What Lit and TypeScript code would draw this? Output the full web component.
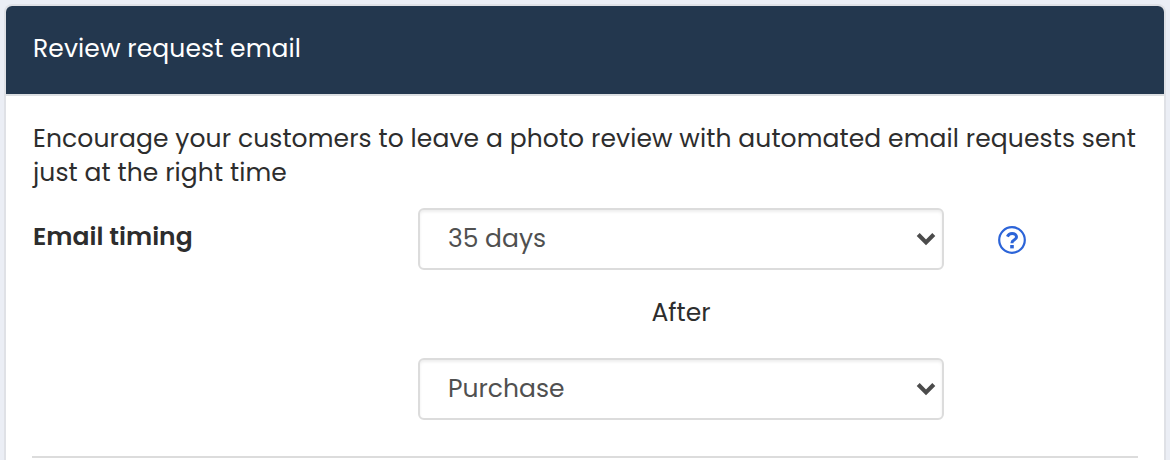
import { LitElement, html, css } from "lit";
import { customElement, property } from "lit/decorators.js";

@customElement("select-field")
class SelectField extends LitElement {
  @property() value = "";
  @property() label = "";

  static styles = css`
    :host { display: block; }
    .field {
      box-sizing: border-box;
      height: 62px;
      display: flex;
      align-items: center;
      justify-content: space-between;
      padding: 0 6px 0 28px;
      border: 2px solid #dcdcdc;
      border-radius: 6px;
      background: #fff;
      box-shadow: inset 0 2px 3px rgba(0, 0, 0, 0.07);
      color: #505050;
    }
    .value { line-height: 34px; padding-bottom: 1px; letter-spacing: var(--value-spacing, 0); }
    .chevron { display: block; width: 20px; height: 14px; }
  `;

  render() {
    return html`<div class="field" role="combobox" aria-label=${this.label}>
      <span class="value">${this.value}</span>
      <svg class="chevron" viewBox="0 0 20 14" fill="none" stroke="#4b4b4b" stroke-width="4.2">
        <path d="M2.2 2.6 10 10.4 17.8 2.6" />
      </svg>
    </div>`;
  }
}

@customElement("app-root")
class AppRoot extends LitElement {
  static styles = css`
    :host {
      display: block;
      box-sizing: border-box;
      height: 460px;
      overflow: hidden;
      padding: 6px 6px 0;
      background: #ebeef5;
      font: 400 25px/34px Poppins, Inter, "Open Sans", sans-serif;
      color: #2d2d2d;
    }
    .card {
      height: 480px;
      background: #fff;
      border-radius: 6px 6px 0 0;
      box-shadow: 0 0 0 2px #dfe1e6;
    }
    .header {
      box-sizing: border-box;
      height: 90px;
      padding: 26px 27px 0;
      background: #23374e;
      border-bottom: 2px solid #dcdfe2;
      border-radius: 6px 6px 0 0;
      color: #fff;
    }
    .title { display: inline-block; letter-spacing: 0.1px; }
    .body { padding: 26px 26px 0; }
    .intro { margin: 0 0 0 1px; white-space: nowrap; }
    .line { display: block; }
    .first { letter-spacing: 0.1px; }
    .second { letter-spacing: 0.1px; }
    .form {
      display: grid;
      grid-template-columns: 386px 526px 1fr;
      grid-template-rows: 62px 88px 62px;
      margin-top: 18px;
    }
    .label { padding: 12px 0 0 1px; font-weight: 600; }
    .help { display: block; width: 28px; height: 28px; margin: 18px 0 0 54px; }
    .after { grid-column: 2; text-align: center; padding-top: 26px; }
    .trigger { grid-column: 2; }
    .rule { height: 2px; margin-top: 36px; background: #dcdcdc; }
  `;

  render() {
    return html`<section class="card">
      <header class="header"><span class="title">Review request email</span></header>
      <div class="body">
        <p class="intro">
          <span class="line first">Encourage your customers to leave a photo review with automated email requests sent</span>
          <span class="line second">just at the right time</span>
        </p>
        <div class="form">
          <div class="label"><span class="label-text">Email timing</span></div>
          <select-field class="delay" label="Email timing" value="35 days"></select-field>
          <svg class="help" viewBox="0 0 28 28" fill="none" stroke="#2c64d8">
            <circle cx="14" cy="14" r="12.8" stroke-width="2.2" />
            <path d="M9.4 10.6C10.4 8.4 12 7.5 14.1 7.5c2.5 0 4.4 1.4 4.4 3.5 0 3.1-4.5 2.9-4.5 5.7v.5" stroke-width="3" />
            <path d="M14 19v3.4" stroke-width="3.6" />
          </svg>
          <div class="after"><span class="after-text">After</span></div>
          <select-field class="trigger" label="Trigger" value="Purchase"></select-field>
        </div>
        <div class="rule"></div>
      </div>
    </section>`;
  }
}
